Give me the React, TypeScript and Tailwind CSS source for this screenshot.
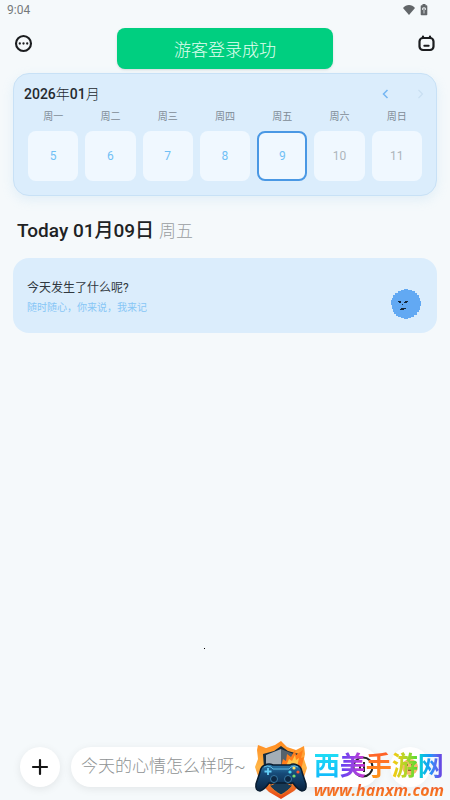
import React from "react";

const days = [
  { name: "周一", date: 5 },
  { name: "周二", date: 6 },
  { name: "周三", date: 7 },
  { name: "周四", date: 8 },
  { name: "周五", date: 9, selected: true },
  { name: "周六", date: 10, future: true },
  { name: "周日", date: 11, future: true },
];

function StatusBar() {
  return (
    <div className="flex h-5 items-center justify-between pr-[22px] pl-[7px] text-xs text-[#75797b]">
      <span>9:04</span>
      <div className="flex items-center gap-1">
        <svg width="14" height="12" viewBox="0 0 14 12" fill="#626669" aria-hidden="true">
          <path d="M1 4C4 0 10 0 13 4L7 11Z" />
        </svg>
        <svg width="8" height="12" viewBox="0 0 8 12" fill="#626669" aria-hidden="true">
          <path d="M2.500 0h3v1.200h1q.8 0 .8.8v8.500q0 .8-.8.8h-5q-.8 0-.8-.8V2q0-.8.8-.8h1z" />
          <path d="M4 3v6.500M2.500 4h3v2M2.500 4v2" stroke="#dfe3e5" strokeWidth=".9" fill="none" />
        </svg>
      </div>
    </div>
  );
}

function Header() {
  return (
    <header className="relative flex h-[53px] items-start justify-between px-3.5 pt-3.5">
      <button aria-label="更多" className="flex size-[19px] items-center justify-center">
        <svg width="19" height="19" viewBox="0 0 19 19" fill="none" aria-hidden="true">
          <circle cx="9.500" cy="9.500" r="7.500" stroke="#1b1d1f" strokeWidth="2.100" />
          <circle cx="5.800" cy="9.500" r="1.150" fill="#1b1d1f" />
          <circle cx="9.500" cy="9.500" r="1.150" fill="#1b1d1f" />
          <circle cx="13.200" cy="9.500" r="1.150" fill="#1b1d1f" />
        </svg>
      </button>
      <div
        role="status"
        className="absolute top-2 left-1/2 flex h-[41px] w-[216px] -translate-x-1/2 items-center justify-center rounded-lg bg-[#00cf80] pt-1 text-[17px] font-light text-[#e4fff1] shadow-sm"
      >
        游客登录成功
      </div>
      <button aria-label="日历" className="flex size-[19px] items-center justify-center">
        <svg width="19" height="19" viewBox="0 0 19 19" fill="none" stroke="#1b1d1f" strokeWidth="2.200" strokeLinecap="round" aria-hidden="true">
          <rect x="2.500" y="4" width="14" height="12" rx="3.500" />
          <path d="M6 2.500v1.500M13 2.500v1.500" />
          <path d="M7.300 11.700h4.400" strokeWidth="1.900" />
        </svg>
      </button>
    </header>
  );
}

function Calendar() {
  return (
    <section className="mx-[13px] rounded-2xl border border-[#c8e1f6] bg-[#dbedfc] pt-2 pb-3.5 shadow-[0_4px_12px_rgba(150,200,235,0.2)]">
      <div className="flex h-6 items-center justify-between px-2.5">
        <h2 className="text-sm font-medium text-[#24292e]">
          2026<span className="font-light">年</span>01<span className="font-light">月</span>
        </h2>
        <div className="flex items-center gap-[22px]">
          <button aria-label="上一周">
            <svg width="12" height="12" viewBox="0 0 12 12" fill="none" stroke="#75b6f2" strokeWidth="1.500" aria-hidden="true">
              <path d="M7.500 2 3.500 6l4 4" />
            </svg>
          </button>
          <button aria-label="下一周" disabled>
            <svg width="12" height="12" viewBox="0 0 12 12" fill="none" stroke="#c9dff1" strokeWidth="1.200" aria-hidden="true">
              <path d="m4.500 2 4 4-4 4" />
            </svg>
          </button>
        </div>
      </div>
      <div className="grid grid-cols-7 gap-[7px] px-3.5">
        {days.map((day) => (
          <div key={day.date} className="flex flex-col text-center">
            <span className="h-[25px] pt-[3px] text-[10px] leading-4 text-[#7e8b96]">{day.name}</span>
            <button
              className={
                "flex aspect-square w-full items-center justify-center rounded-lg bg-[#f0f8ff] text-xs " +
                (day.selected ? "border-2 border-[#4a98e4] text-[#70c0f5]" : day.future ? "text-[#adb5bb]" : "text-[#70c0f5]")
              }
            >
              {day.date}
            </button>
          </div>
        ))}
      </div>
    </section>
  );
}

function MoodFace() {
  return (
    <svg width="30" height="30" viewBox="0 0 30 30" aria-hidden="true">
      <path d="M10 1h3V0h4v1h4v1h3v2h2v2h2v3h1v3h1v5h-1v4h-1v2h-2v3h-3v2h-3v1h-3v1h-4v-1h-3v-1H7v-1H5v-2H3v-2H2v-3H1v-4H0v-5h1V9h1V6h2V4h3V2h3z" fill="#62a9f3" />
      <path d="M7 12h3v2H8v-1H7zM13 13h1v-1h3v1h-1v1h-3zM11 15h1v1h-1zM10 19h5v1h-2v1H9v-1h1z" fill="#15283c" />
    </svg>
  );
}

function Watermark() {
  return (
    <div className="absolute right-0 bottom-0 flex items-end gap-[5px] pr-1.5">
      <svg width="56" height="60" viewBox="0 0 56 60" fill="none" aria-hidden="true">
        <defs>
          <linearGradient id="fireRim" x1="0" y1="0" x2="0" y2="1">
            <stop stopColor="#ff8a1f" />
            <stop offset=".45" stopColor="#ffb648" />
            <stop offset="1" stopColor="#e54413" />
          </linearGradient>
          <linearGradient id="padBody" x1="0" y1="0" x2="0" y2="1">
            <stop stopColor="#2f7fb0" />
            <stop offset=".35" stopColor="#164a78" />
            <stop offset="1" stopColor="#0a2340" />
          </linearGradient>
        </defs>
        <path d="M28 1 34 7l9 3 8-4 1 8-1 5 3 9-3 9-3 7-7 7-13 8-12-7-8-8-3-8-3-9 3-8-1-9 1-5 8 3 9-3z" fill="url(#fireRim)" />
        <path d="M28 6 35 11l11 3-1 14c0 11-7 19-17 25-10-6-17-14-17-25L10 14l11-3z" fill="#142b3e" />
        <path d="M28 9 13 15v12c0 10 6 17 15 23z" fill="#a3aeb7" />
        <path d="M28 9 43 15v12c0 10-6 17-15 23z" fill="#55626c" />
        <path d="M16 45c4 1 7-4 12-4s8 5 12 4c-3 4-7 7-12 10-5-3-9-6-12-10z" fill="#183b57" stroke="#f07a22" strokeWidth="1" />
        <path d="m28 27 2-8 3 2 1-7 4 3 4-7 1 5 7-5-2 8 3-1-3 13z" fill="#ff7d1a" />
        <path d="m33 26 3-7 3 2 3-6 1 5 3-2-2 9z" fill="#ffc64a" />
        <path d="M12 25q-4 1-5 7L3 44q-1 7 4 7 4-1 9-8h24q5 7 9 8 5 0 4-7l-4-12q-1-6-5-7-4-2-7 0H20q-4-2-8 0z" fill="url(#padBody)" stroke="#081c30" strokeWidth="1.500" />
        <path d="M11 27q3-2 7 0l2 2h16l2-2q4-2 7 0" stroke="#60bce1" strokeWidth="1" />
        <path d="M15 28v7M11.500 31.500h7" stroke="#65cff7" strokeWidth="1.800" />
        <circle cx="21" cy="39" r="3.500" fill="#0d2844" stroke="#3678a4" />
        <circle cx="35" cy="39" r="3.500" fill="#0d2844" stroke="#3678a4" />
        <circle cx="41" cy="28" r="1.600" fill="#ffe164" />
        <circle cx="37" cy="32" r="1.600" fill="#4edaf1" />
        <circle cx="45" cy="32" r="1.600" fill="#ff572d" />
        <circle cx="41" cy="36" r="1.600" fill="#76df70" />
      </svg>
      <div>
        <div className="text-[26px] leading-7 font-bold text-transparent">
          <span className="bg-linear-to-b from-[#22e0f4] to-[#12b4fb] bg-clip-text">西</span>
          <span className="bg-linear-to-r from-[#5b3ff5] to-[#d02fd0] bg-clip-text">美</span>
          <span className="bg-linear-to-b from-[#ff5b28] to-[#ff9a12] bg-clip-text">手</span>
          <span className="bg-linear-to-r from-[#fbc90b] to-[#3bdb34] bg-clip-text">游</span>
          <span className="bg-linear-to-r from-[#10d8d0] via-[#2090fa] to-[#6b28dc] bg-clip-text">网</span>
        </div>
        <div className="bg-linear-to-b from-[#e9432b] to-[#fb8a1c] bg-clip-text font-['Open_Sans',sans-serif] text-base leading-5 font-bold text-transparent italic">
          www.hanxm.com
        </div>
      </div>
    </div>
  );
}

function Composer() {
  return (
    <footer className="relative mt-auto flex h-[60px] items-start gap-[11px] px-5 pt-[7px]">
      <span className="absolute bottom-[151px] left-[204px] size-px bg-black" />
      <button aria-label="添加" className="flex size-10 shrink-0 items-center justify-center rounded-full bg-white shadow-[0_2px_8px_rgba(0,0,0,0.08)]">
        <svg width="18" height="18" viewBox="0 0 18 18" fill="none" stroke="#151515" strokeWidth="2.200" strokeLinecap="round" aria-hidden="true">
          <path d="M9 2v14M2 9h14" />
        </svg>
      </button>
      <div className="flex h-10 min-w-0 flex-1 items-center rounded-full bg-white pr-1 pl-2.5 shadow-[0_2px_8px_rgba(0,0,0,0.08)]">
        <input aria-label="今天的心情" placeholder="今天的心情怎么样呀~" className="min-w-0 flex-1 bg-transparent text-[17px] font-light outline-none placeholder:text-[#8f9394]" />
        <button aria-label="语音输入">
          <svg width="24" height="24" viewBox="0 0 24 24" fill="none" stroke="#242424" strokeWidth="2" aria-hidden="true">
            <circle cx="12" cy="12" r="9.500" />
            <path d="M9 9v6M13 7v10" />
          </svg>
        </button>
      </div>
      <button aria-label="心情" className="flex size-10 shrink-0 items-center justify-center rounded-full bg-white shadow-[0_2px_8px_rgba(0,0,0,0.04)]">
        <svg width="22" height="22" viewBox="0 0 22 22" aria-hidden="true">
          <circle cx="11" cy="11" r="8" fill="#f5b86c" />
          <path d="M6 9h3M12 9h3M9 14h4" stroke="#7a4a1c" strokeWidth="1.500" />
        </svg>
      </button>
      <Watermark />
    </footer>
  );
}

export default function App() {
  return (
    <div className="flex min-h-screen flex-col overflow-hidden bg-[#f5f9fb] font-[Roboto,'Noto_Sans_CJK_SC',sans-serif]">
      <StatusBar />
      <Header />
      <main>
        <Calendar />
        <h1 className="flex items-baseline gap-[5px] px-[17px] pt-[21px] text-[19px] leading-7 font-medium text-[#202224]">
          <span>Today 01月09日</span>
          <span className="text-[17px] font-light text-[#999da0]">周五</span>
        </h1>
        <section className="mx-[13px] mt-[13px] flex h-[75px] items-center justify-between rounded-2xl bg-[#dbedfc] pr-4 pl-3.5">
          <div className="pt-1">
            <p className="text-xs leading-5 text-[#303840]">今天发生了什么呢?</p>
            <p className="text-[10px] leading-5 text-[#87c6f6]">随时随心，你来说，我来记</p>
          </div>
          <div className="pt-4">
            <MoodFace />
          </div>
        </section>
      </main>
      <Composer />
    </div>
  );
}
